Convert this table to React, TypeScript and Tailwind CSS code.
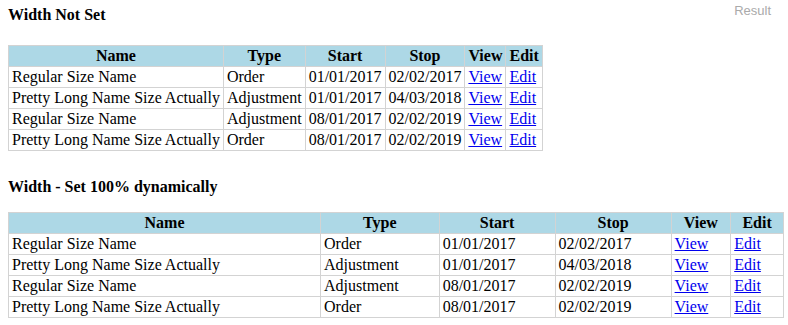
const rows = [
  { name: "Regular Size Name", type: "Order", start: "01/01/2017", stop: "02/02/2017" },
  { name: "Pretty Long Name Size Actually", type: "Adjustment", start: "01/01/2017", stop: "04/03/2018" },
  { name: "Regular Size Name", type: "Adjustment", start: "08/01/2017", stop: "02/02/2019" },
  { name: "Pretty Long Name Size Actually", type: "Order", start: "08/01/2017", stop: "02/02/2019" },
];

function DataTable({ full }: { full?: boolean }) {
  const th = "border border-[#d3d3d3] px-[3px] py-px font-bold text-center";
  const td = "border border-[#d3d3d3] px-[3px] py-px text-left";
  return (
    <table className={`border-collapse ${full ? "w-full" : ""}`}>
      <thead>
        <tr className="bg-[#add8e6]">
          <th className={th}>Name</th>
          <th className={th}>Type</th>
          <th className={th}>Start</th>
          <th className={th}>Stop</th>
          <th className={th}>View</th>
          <th className={th}>Edit</th>
        </tr>
      </thead>
      <tbody>
        {rows.map((r, i) => (
          <tr key={i}>
            <td className={td}>{r.name}</td>
            <td className={td}>{r.type}</td>
            <td className={td}>{r.start}</td>
            <td className={td}>{r.stop}</td>
            <td className={td}>
              <a href="#" className="text-[#0000ee] underline">View</a>
            </td>
            <td className={td}>
              <a href="#" className="text-[#0000ee] underline">Edit</a>
            </td>
          </tr>
        ))}
      </tbody>
    </table>
  );
}

export default function App() {
  return (
    <div className="relative w-[788px] h-[325px] bg-white text-black text-[16px] leading-[normal] font-['Liberation_Serif',serif] pl-2 pr-1 pt-[6px] overflow-hidden">
      <div className="absolute top-[3px] right-[17px] text-[13px] text-[#aaa] font-['Liberation_Sans',sans-serif]">
        Result
      </div>
      <h4 className="font-bold mb-[21px]">Width Not Set</h4>
      <DataTable />
      <h4 className="font-bold mt-[27px] mb-[16px]">Width - Set 100% dynamically</h4>
      <DataTable full />
    </div>
  );
}
